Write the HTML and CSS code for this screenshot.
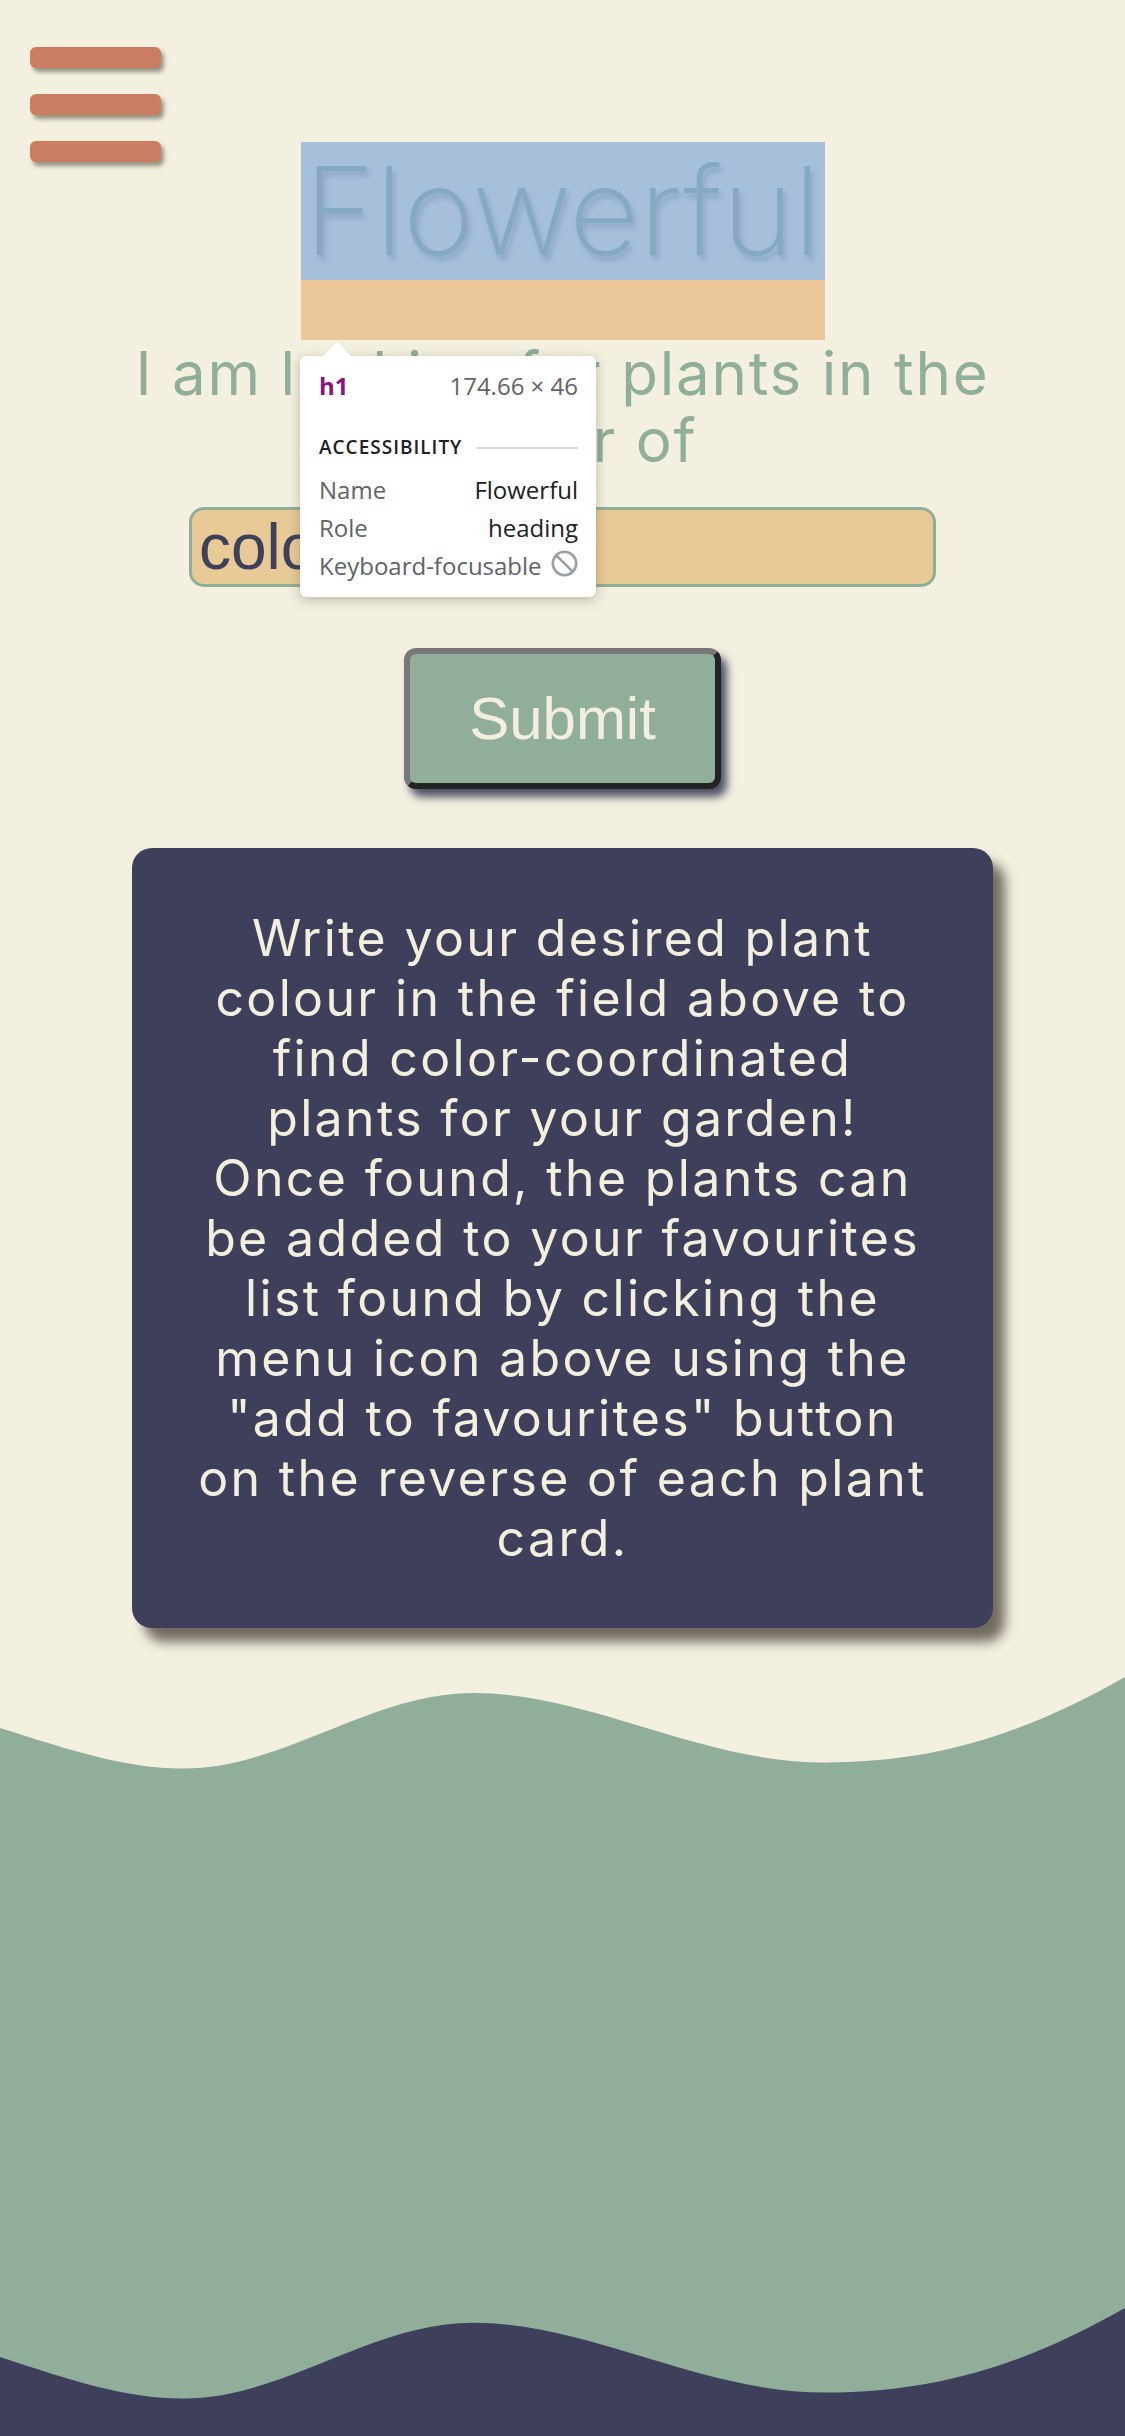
FILE: index.html
```html
<!DOCTYPE html>
<html lang="en">
<head>
<meta charset="utf-8">
<title>Flowerful</title>
<link rel="stylesheet" href="styles.css">
</head>
<body>
  <button class="menu-toggle" type="button" aria-label="Open favourites menu">
    <span class="menu-bar"></span>
    <span class="menu-bar"></span>
    <span class="menu-bar"></span>
  </button>

  <main class="search">
    <h1 class="title">Flowerful</h1>
    <p class="lead">I am looking for plants in the colour of</p>
    <form class="search-form">
      <input class="colour-input" type="text" name="colour" placeholder="colour">
      <button class="submit-btn" type="submit">Submit</button>
    </form>
    <section class="info-card">
      <p class="info-text">Write your desired plant<br>colour in the field above to<br>find color-coordinated<br>plants for your garden!<br>Once found, the plants can<br>be added to your favourites<br>list found by clicking the<br>menu icon above using the<br>"add to favourites" button<br>on the reverse of each plant<br>card.</p>
    </section>
  </main>

  <footer class="waves">
    <svg class="wave" viewBox="0 0 1125 100" preserveAspectRatio="none" aria-hidden="true">
      <path class="wave-sage" d="M0,58 C70,80 125,98.5 183,98.5 C285,98.5 370,23 473,23 C590,23 700,92.6 825,92.6 C950,92.6 1040,55 1125,7 L1125,100 L0,100 Z"/>
    </svg>
    <div class="wave-fill"></div>
    <svg class="wave wave-on-sage" viewBox="0 0 1125 100" preserveAspectRatio="none" aria-hidden="true">
      <path class="wave-navy" d="M0,57 C70,80 125,98.5 183,98.5 C285,98.5 370,22.8 473,22.8 C590,22.8 700,92.6 825,92.6 C950,92.6 1040,56 1125,8 L1125,100 L0,100 Z"/>
    </svg>
    <div class="wave-base"></div>
  </footer>

  <div class="inspector" role="tooltip">
    <div class="insp-head">
      <span class="insp-tag">h1</span>
      <span class="insp-size">174.66 × 46</span>
    </div>
    <div class="insp-section">
      <span class="insp-section-title">Accessibility</span>
      <span class="insp-rule"></span>
    </div>
    <div class="insp-row"><span class="insp-key">Name</span><span class="insp-val">Flowerful</span></div>
    <div class="insp-row"><span class="insp-key">Role</span><span class="insp-val">heading</span></div>
    <div class="insp-row">
      <span class="insp-key">Keyboard-focusable</span>
      <svg class="insp-icon" viewBox="0 0 27 27" aria-hidden="true">
        <circle cx="13.5" cy="13.5" r="11.7" fill="none" stroke="#9aa0a6" stroke-width="2.6"/>
        <line x1="5.3" y1="5.3" x2="21.7" y2="21.7" stroke="#9aa0a6" stroke-width="2.6"/>
      </svg>
    </div>
  </div>
</body>
</html>
```
FILE: styles.css
```css
* { box-sizing: border-box; }

html, body { margin: 0; padding: 0; }

body {
  position: relative;
  min-height: 100vh;
  display: flex;
  flex-direction: column;
  background: #f3f0e0;
  font-family: "Inter", "Noto Sans", sans-serif;
}

/* hamburger */
.menu-toggle {
  position: absolute;
  top: 47px;
  left: 30px;
  display: flex;
  flex-direction: column;
  gap: 26px;
  padding: 0;
  border: 0;
  background: none;
  cursor: pointer;
}
.menu-bar {
  display: block;
  width: 131px;
  height: 21px;
  border-radius: 6px;
  background: #cb7d62;
  box-shadow: 3px 4px 4px rgba(70, 70, 50, 0.55);
}

/* main column */
.search {
  display: flex;
  flex-direction: column;
  align-items: center;
  padding-top: 142px;
}

.title {
  width: 524px;
  height: 138px;
  margin: 0 0 60px;
  background: #a7c0da;
  box-shadow: 0 60px 0 0 #ecc799;
  color: #86a9c2;
  font-family: "Inter", sans-serif;
  font-weight: 200;
  font-size: 122px;
  line-height: 138px;
  text-align: center;
  text-shadow: 3px 5px 5px rgba(95, 125, 155, 0.35);
}

.lead {
  width: 900px;
  margin: 0;
  color: #90ae9a;
  font-size: 60px;
  font-weight: 400;
  letter-spacing: 1.8px;
  line-height: 67px;
  text-align: center;
}

.search-form {
  display: flex;
  flex-direction: column;
  align-items: center;
}

.colour-input {
  width: 747px;
  height: 80px;
  margin-top: 33px;
  padding: 0 7px;
  border: 3px solid #8fae99;
  border-radius: 15px;
  background: #e8ca97;
  color: #3e3f5b;
  font-family: "Liberation Sans", Arial, sans-serif;
  font-size: 64px;
  outline: none;
}
.colour-input::placeholder { color: #3e3f5b; opacity: 1; }

.submit-btn {
  width: 317px;
  height: 141px;
  margin-top: 61px;
  border-style: solid;
  border-width: 6px;
  border-color: #787878 #222222 #222222 #787878;
  border-radius: 12px;
  background: #90ae9a;
  box-shadow: 6px 8px 8px rgba(61, 63, 90, 0.9);
  color: #f3efdf;
  font-family: "Liberation Sans", Arial, sans-serif;
  font-size: 60px;
  cursor: pointer;
}

.info-card {
  width: 861px;
  margin-top: 59px;
  padding: 60px 30px;
  border-radius: 20px;
  background: #3e3f5b;
  box-shadow: 12px 14px 12px rgba(70, 64, 52, 0.75);
}
.info-text {
  margin: 0;
  color: #f3efdf;
  font-size: 50px;
  letter-spacing: 2.35px;
  line-height: 60px;
  text-align: center;
  white-space: nowrap;
}

/* waves */
.waves {
  flex: 1;
  display: flex;
  flex-direction: column;
  margin-top: 42px;
}
.wave {
  display: block;
  width: 100%;
  height: 100px;
}
.wave-sage { fill: #90ae9a; }
.wave-navy { fill: #3e3f5b; }
.wave-on-sage { background: #90ae9a; }
.wave-fill {
  flex: 1;
  background: #90ae9a;
}
.wave-base {
  height: 36px;
  background: #3e3f5b;
}

/* devtools inspector tooltip */
.inspector {
  position: absolute;
  top: 356px;
  left: 300px;
  width: 296px;
  height: 241px;
  padding: 13px 18px 0 19px;
  border-radius: 6px;
  background: #ffffff;
  box-shadow: 0 3px 12px rgba(60, 50, 30, 0.3);
  font-family: "Open Sans", "Noto Sans", sans-serif;
  font-size: 24px;
  color: #5f6368;
}
.inspector::before {
  content: "";
  position: absolute;
  top: -14px;
  left: 23px;
  border-left: 14px solid transparent;
  border-right: 14px solid transparent;
  border-bottom: 14px solid #ffffff;
}
.insp-head {
  display: flex;
  justify-content: space-between;
  line-height: 33px;
}
.insp-tag {
  color: #881280;
  font-weight: 700;
}
.insp-size { color: #5f6368; }
.insp-section {
  display: flex;
  align-items: center;
  margin-top: 29px;
  margin-bottom: 7px;
  line-height: 33px;
  font-size: 19px;
  letter-spacing: 1px;
  text-transform: uppercase;
  color: #202124;
  font-weight: 600;
}
.insp-rule {
  flex: 1;
  height: 2px;
  margin-left: 15px;
  background: #dadce0;
}
.insp-row {
  display: flex;
  justify-content: space-between;
  align-items: center;
  height: 38px;
  line-height: 38px;
}
.insp-key { color: #5f6368; }
.insp-val { color: #202124; }
.insp-icon {
  width: 27px;
  height: 27px;
  margin-top: -6px;
}
```
